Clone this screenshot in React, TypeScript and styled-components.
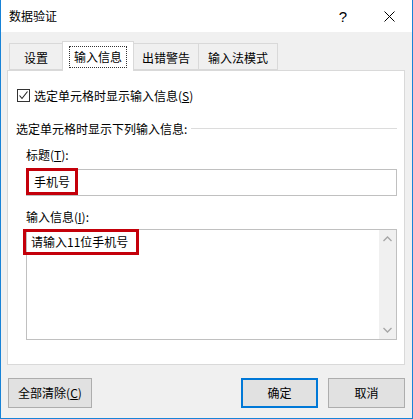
import React from 'react'
import styled, { createGlobalStyle } from 'styled-components'

const GlobalStyle = createGlobalStyle`
    html, body {
        margin: 0;
        padding: 0;
        background: #fff;
    }
    body {
        font-family: "Noto Sans CJK SC", "Noto Sans", sans-serif;
        font-size: 12px;
        color: #000;
    }
`

const tabs = [
    { label: '设置', width: 54 },
    { label: '输入信息', width: 72 },
    { label: '出错警告', width: 66 },
    { label: '输入法模式', width: 80 },
]

const App: React.FC = () => {
    return (
        <>
            <GlobalStyle />
            <Window>
                <TitleBar>
                    <Caption>数据验证</Caption>
                    <CaptionButton>?</CaptionButton>
                    <CaptionButton>
                        <svg width="11" height="11" viewBox="0 0 11 11">
                            <path d="M0.5 0.5 L10.5 10.5 M10.5 0.5 L0.5 10.5" stroke="#000" strokeWidth="1" />
                        </svg>
                    </CaptionButton>
                </TitleBar>
                <Body>
                    <TabStrip>
                        {tabs.map((t, i) => (
                            <Tab key={t.label} $active={i === 1} $width={t.width}>
                                {i === 1 ? <Focus>{t.label}</Focus> : t.label}
                            </Tab>
                        ))}
                    </TabStrip>
                    <Panel>
                        <CheckRow>
                            <CheckBox>
                                <svg width="11" height="11" viewBox="0 0 11 11">
                                    <path d="M1.5 5.5 L4 8.5 L9.5 1.5" stroke="#222" strokeWidth="1.1" fill="none" />
                                </svg>
                            </CheckBox>
                            <span>选定单元格时显示输入信息(<u>S</u>)</span>
                        </CheckRow>
                        <GroupHeader>
                            <span>选定单元格时显示下列输入信息:</span>
                            <GroupLine />
                        </GroupHeader>
                        <FieldLabel>标题(<u>T</u>):</FieldLabel>
                        <TextBox>
                            <Mark $left={-1} $top={-2} $width={52} $height={27}>手机号</Mark>
                        </TextBox>
                        <FieldLabel>输入信息(<u>I</u>):</FieldLabel>
                        <MemoBox>
                            <Mark $left={-4} $top={-1} $width={116} $height={26}>请输入11位手机号</Mark>
                            <ScrollBar>
                                <svg width="9" height="6" viewBox="0 0 9 6">
                                    <path d="M0.5 5 L4.5 1 L8.5 5" stroke="#a6a6a6" strokeWidth="1.3" fill="none" />
                                </svg>
                                <svg width="9" height="6" viewBox="0 0 9 6">
                                    <path d="M0.5 1 L4.5 5 L8.5 1" stroke="#a6a6a6" strokeWidth="1.3" fill="none" />
                                </svg>
                            </ScrollBar>
                        </MemoBox>
                    </Panel>
                    <ButtonRow>
                        <Button $width={84}>全部清除(<u>C</u>)</Button>
                        <Spacer />
                        <Button $width={77} $primary>确定</Button>
                        <Button $width={77}>取消</Button>
                    </ButtonRow>
                </Body>
            </Window>
        </>
    )
}

export default App

const Window = styled.div`
    width: 413px;
    height: 419px;
    box-sizing: border-box;
    border: 1px solid #1883d7;
    border-top: none;
    background: #f0f0f0;
    display: flex;
    flex-direction: column;
`

const TitleBar = styled.div`
    height: 32px;
    background: #fff;
    display: flex;
    align-items: center;
    padding-left: 8px;
    flex-shrink: 0;
`

const Caption = styled.div`
    flex: 1;
    font-size: 12px;
    line-height: 16px;
`

const CaptionButton = styled.div`
    width: 46px;
    height: 32px;
    display: flex;
    align-items: center;
    justify-content: center;
    font-family: "Liberation Sans", sans-serif;
    font-size: 15px;
    color: #000;
`

const Body = styled.div`
    flex: 1;
    display: flex;
    flex-direction: column;
    padding: 9px 7px 10px 6px;
`

const TabStrip = styled.div`
    display: flex;
    height: 29px;
    margin-left: 2px;
    position: relative;
    z-index: 1;
`

const Tab = styled.div<{ $active?: boolean; $width: number }>`
    box-sizing: border-box;
    width: ${p => p.$width}px;
    height: ${p => (p.$active ? 30 : 27)}px;
    margin-top: ${p => (p.$active ? 0 : 2)}px;
    margin-left: -1px;
    border: 1px solid #d9d9d9;
    border-bottom: ${p => (p.$active ? 'none' : '1px solid #d9d9d9')};
    background: ${p => (p.$active ? '#fff' : '#f0f0f0')};
    display: flex;
    align-items: center;
    justify-content: center;
    padding-top: ${p => (p.$active ? 0 : 2)}px;
    line-height: 16px;
    &:first-child {
        margin-left: 0;
    }
`

const Focus = styled.span`
    border: 1px dotted #333;
    padding: 2px 4px;
    line-height: 16px;
`

const Panel = styled.div`
    flex: 1;
    background: #fff;
    border: 1px solid #d9d9d9;
    display: flex;
    flex-direction: column;
`

const CheckRow = styled.div`
    display: flex;
    align-items: center;
    height: 20px;
    margin: 14px 0 0 9px;
`

const CheckBox = styled.div`
    width: 13px;
    height: 13px;
    box-sizing: border-box;
    border: 1px solid #333;
    display: flex;
    align-items: center;
    justify-content: center;
    margin-right: 4px;
    background: #fff;
`

const GroupHeader = styled.div`
    display: flex;
    align-items: center;
    height: 20px;
    margin: 13px 7px 0 8px;
`

const GroupLine = styled.div`
    flex: 1;
    height: 1px;
    background: #dcdcdc;
    margin-left: 4px;
`

const FieldLabel = styled.div`
    height: 20px;
    line-height: 20px;
    margin: 7px 0 4px 18px;
    & + & {
        margin-top: 0;
    }
`

const TextBox = styled.div`
    position: relative;
    height: 27px;
    box-sizing: border-box;
    border: 1px solid #c0c0c0;
    margin: 0 7px 4px 18px;
    background: #fff;
`

const MemoBox = styled.div`
    position: relative;
    height: 111px;
    box-sizing: border-box;
    border: 1px solid #c0c0c0;
    margin: -2px 7px 0 18px;
    background: #fff;
`

const Mark = styled.span<{ $left: number; $top: number; $width: number; $height: number }>`
    position: absolute;
    left: ${p => p.$left}px;
    top: ${p => p.$top}px;
    width: ${p => p.$width}px;
    height: ${p => p.$height}px;
    box-sizing: border-box;
    border: 3px solid #c4000a;
    padding-left: 2px;
    display: flex;
    align-items: center;
    padding-left: 5px;
    white-space: nowrap;
    line-height: 16px;
`

const ScrollBar = styled.div`
    position: absolute;
    right: 0;
    top: 0;
    bottom: 0;
    width: 17px;
    background: #f0f0f0;
    display: flex;
    flex-direction: column;
    justify-content: space-between;
    align-items: center;
    padding: 6px 0;
    box-sizing: border-box;
`

const ButtonRow = styled.div`
    display: flex;
    gap: 10px;
    margin-top: 13px;
    padding-left: 1px;
`

const Spacer = styled.div`
    flex: 1;
`

const Button = styled.div<{ $width: number; $primary?: boolean }>`
    width: ${p => p.$width}px;
    height: 30px;
    box-sizing: border-box;
    background: #e1e1e1;
    border: ${p => (p.$primary ? '2px solid #0078d7' : '1px solid #adadad')};
    display: flex;
    align-items: center;
    justify-content: center;
    line-height: 16px;
`
